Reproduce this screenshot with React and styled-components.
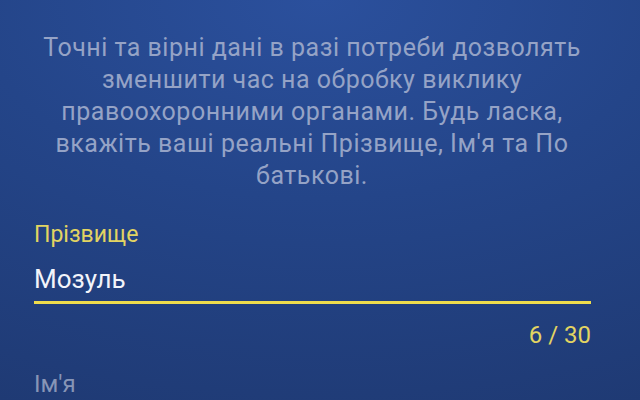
import React from "react";
import styled, { createGlobalStyle } from "styled-components";

const Global = createGlobalStyle`
  html, body { margin: 0; padding: 0; }
  body {
    width: 640px; height: 400px; overflow: hidden;
    font-family: Roboto, "Noto Sans", sans-serif;
  }
`;

const Screen = styled.div`
  width: 640px;
  height: 400px;
  box-sizing: border-box;
  padding: 32px 50px 0 34px;
  display: flex;
  flex-direction: column;
  background: radial-gradient(ellipse 120% 110% at 50% 0%, #2b509d 0%, #244589 45%, #1f3a74 100%);
  overflow: hidden;
`;

const Intro = styled.p`
  margin: 0;
  font-size: 25px;
  line-height: 32px;
  letter-spacing: 0.5px;
  color: #95a3c6;
  text-align: center;
`;

const Field = styled.div`
  display: flex;
  flex-direction: column;
  margin-top: ${(p) => p.$top}px;
  width: 557px;
`;

const Label = styled.div`
  font-size: ${(p) => (p.$active ? 23 : 24)}px;
  line-height: 24px;
  color: ${(p) => (p.$active ? "#e2d462" : "#8795b6")};
`;

const Value = styled.div`
  margin-top: 17px;
  font-size: 26px;
  line-height: 30px;
  color: #f2f4fa;
  padding-bottom: 7px;
  border-bottom: 3px solid #eedc4c;
`;

const Counter = styled.div`
  margin-top: 17px;
  align-self: flex-end;
  font-size: 24px;
  line-height: 28px;
  color: #e2d462;
`;

export default function App() {
  return (
    <>
      <Global />
      <Screen>
        <Intro>
          Точні та вірні дані в разі потреби дозволять зменшити час на обробку виклику
          правоохоронними органами. Будь ласка, вкажіть ваші реальні Прізвище, Ім'я та По
          батькові.
        </Intro>
        <Field $top={31}>
          <Label $active>Прізвище</Label>
          <Value>Мозуль</Value>
          <Counter>6 / 30</Counter>
        </Field>
        <Field $top={23}>
          <Label>Ім'я</Label>
        </Field>
      </Screen>
    </>
  );
}
